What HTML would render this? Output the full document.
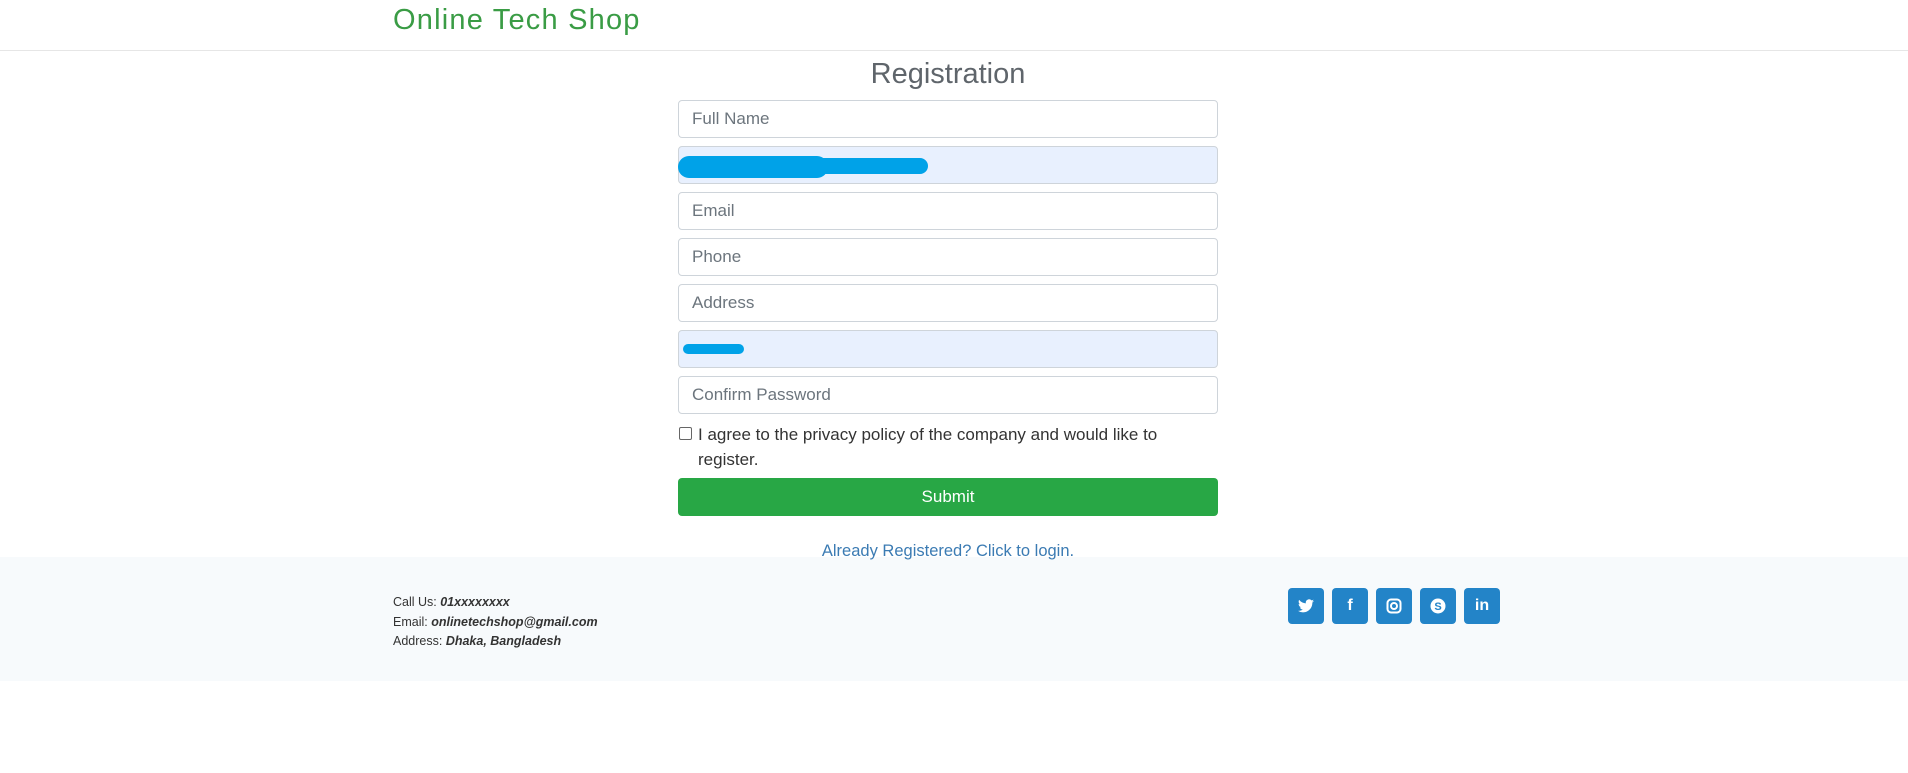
<!DOCTYPE html>
<html><head><meta charset="utf-8"><style>
*{box-sizing:border-box;margin:0;padding:0}
body{width:1908px;height:773px;background:#fff;font-family:"Liberation Sans",sans-serif;position:relative;overflow:hidden}
.hdr{position:absolute;left:0;top:0;width:1908px;height:51px;border-bottom:1px solid #e6e6e6}
.logo{position:absolute;left:393px;top:4px;font-size:29px;color:#3a9c45;letter-spacing:1.2px}
.title{position:absolute;left:0;width:1896px;text-align:center;top:58px;font-size:29px;color:#5f656b}
.inp{position:absolute;left:678px;width:540px;height:38px;border:1px solid #ced4da;border-radius:4px;background:#fff;font-size:17px;color:#6c757d;padding:8px 13px}
.af{background:#e8f0fe}
.blob{position:absolute;background:#00a2e8;border-radius:12px}
.chk{position:absolute;left:679px;top:427px;width:13px;height:13px;border:1px solid #666;border-radius:2px}
.agree{position:absolute;left:698px;top:422px;width:520px;font-size:17px;line-height:25px;color:#333}
.btn{position:absolute;left:678px;top:478px;width:540px;height:38px;background:#28a745;border-radius:4px;color:#fff;font-size:17px;text-align:center;line-height:38px}
.link{position:absolute;left:0;width:1896px;text-align:center;top:542px;font-size:16.5px;color:#3b7bb3}
.foot{position:absolute;left:0;top:557px;width:1908px;height:124px;background:#f7fafc}
.ft{position:absolute;left:393px;top:593px;font-size:12.5px;line-height:19.5px;color:#333}
.ft b{font-style:italic}
.soc{position:absolute;top:588px;width:36px;height:36px;background:#2384c8;border-radius:4px;color:#fff;font-weight:bold;font-size:16px;text-align:center;line-height:36px}
</style></head><body>
<div class="hdr"><div class="logo">Online Tech Shop</div></div>
<div class="title">Registration</div>
<div class="inp" style="top:100px">Full Name</div>
<div class="inp af" style="top:146px"></div>
<div class="blob" style="left:678px;top:156px;width:150px;height:22px"></div>
<div class="blob" style="left:800px;top:158px;width:128px;height:16px"></div>
<div class="inp" style="top:192px">Email</div>
<div class="inp" style="top:238px">Phone</div>
<div class="inp" style="top:284px">Address</div>
<div class="inp af" style="top:330px"></div>
<div class="blob" style="left:683px;top:344px;width:61px;height:10px"></div>
<div class="inp" style="top:376px">Confirm Password</div>
<div class="chk"></div>
<div class="agree">I agree to the privacy policy of the company and would like to register.</div>
<div class="btn">Submit</div>
<div class="foot"></div>
<div class="link">Already Registered? Click to login.</div>
<div class="ft">Call Us: <b>01xxxxxxxx</b><br>Email: <b>onlinetechshop@gmail.com</b><br>Address: <b>Dhaka, Bangladesh</b></div>
<div class="soc" style="left:1288px"><svg width="16" height="14" viewBox="0 0 24 20" style="margin-top:11px"><path fill="#fff" d="M24 2.4a10 10 0 0 1-2.8.8A5 5 0 0 0 23.3.4a10 10 0 0 1-3.1 1.2A4.9 4.9 0 0 0 11.8 6 14 14 0 0 1 1.7.9a4.9 4.9 0 0 0 1.5 6.6A4.9 4.9 0 0 1 1 6.9a4.9 4.9 0 0 0 3.9 4.9 5 5 0 0 1-2.2.1 4.9 4.9 0 0 0 4.6 3.4A9.9 9.9 0 0 1 0 17.3 14 14 0 0 0 7.5 19.5c9 0 14-7.5 14-14v-.6A10 10 0 0 0 24 2.4z"/></svg></div>
<div class="soc" style="left:1332px">f</div>
<div class="soc" style="left:1376px"><svg width="16" height="16" viewBox="0 0 16 16" style="margin-top:10px"><rect x="1.5" y="1.5" width="13" height="13" rx="3.5" fill="none" stroke="#fff" stroke-width="2"/><circle cx="8" cy="8" r="3" fill="none" stroke="#fff" stroke-width="2"/></svg></div>
<div class="soc" style="left:1420px"><svg width="16" height="16" viewBox="0 0 16 16" style="margin-top:10px"><circle cx="8" cy="8" r="7.5" fill="#fff"/><text x="8" y="12" font-size="11" font-weight="bold" text-anchor="middle" fill="#2384c8" font-family="Liberation Sans">S</text></svg></div>
<div class="soc" style="left:1464px">in</div>
</body></html>
